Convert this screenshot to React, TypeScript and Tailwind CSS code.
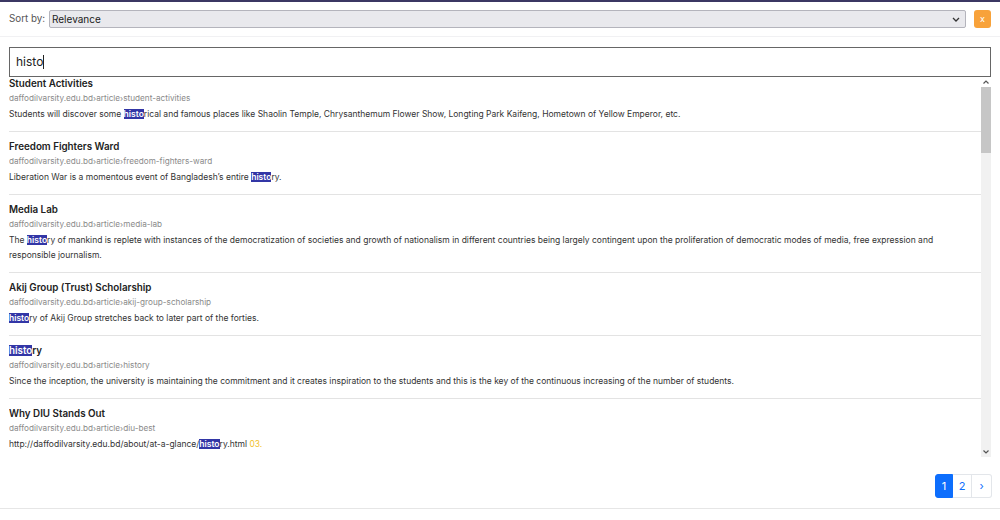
import React from "react";

type Result = {
  title: React.ReactNode;
  slug: string;
  desc: React.ReactNode;
};

function Hl({ children }: { children: React.ReactNode }) {
  return <mark className="bg-[#3236a6] text-white font-semibold">{children}</mark>;
}

const RESULTS: Result[] = [
  {
    title: "Student Activities",
    slug: "student-activities",
    desc: (
      <>
        Students will discover some <Hl>histo</Hl>rical and famous places like Shaolin Temple, Chrysanthemum Flower
        Show, Longting Park Kaifeng, Hometown of Yellow Emperor, etc.
      </>
    ),
  },
  {
    title: "Freedom Fighters Ward",
    slug: "freedom-fighters-ward",
    desc: (
      <>
        Liberation War is a momentous event of Bangladesh’s entire <Hl>histo</Hl>ry.
      </>
    ),
  },
  {
    title: "Media Lab",
    slug: "media-lab",
    desc: (
      <>
        The <Hl>histo</Hl>ry of mankind is replete with instances of the democratization of societies and growth of
        nationalism in different countries being largely contingent upon the proliferation of democratic modes of
        media, free expression and responsible journalism.
      </>
    ),
  },
  {
    title: "Akij Group (Trust) Scholarship",
    slug: "akij-group-scholarship",
    desc: (
      <>
        <Hl>histo</Hl>ry of Akij Group stretches back to later part of the forties.
      </>
    ),
  },
  {
    title: (
      <>
        <Hl>histo</Hl>ry
      </>
    ),
    slug: "history",
    desc: (
      <>
        Since the inception, the university is maintaining the commitment and it creates inspiration to the students
        and this is the key of the continuous increasing of the number of students.
      </>
    ),
  },
  {
    title: "Why DIU Stands Out",
    slug: "diu-best",
    desc: (
      <>
        http://daffodilvarsity.edu.bd/about/at-a-glance/<Hl>histo</Hl>ry.html{" "}
        <span className="text-[#f2c12e]">03.</span>
      </>
    ),
  },
];

function ResultItem({ r, first }: { r: Result; first: boolean }) {
  return (
    <div className={`${first ? "pt-0" : "pt-[8px] border-t border-[#e3e3e3]"} pb-[9px]`}>
      <div className="text-[9.8px] leading-[14px] font-semibold text-[#222]">{r.title}</div>
      <div className="text-[8.2px] leading-[14px] text-[#8a8a8a]">daffodilvarsity.edu.bd›article›{r.slug}</div>
      <div className="mt-[2px] text-[8.5px] leading-[15px] text-[#333]">{r.desc}</div>
    </div>
  );
}

function FakeScrollbar() {
  return (
    <div className="w-[10px] shrink-0 bg-[#f1f1f1] flex flex-col">
      <div className="h-[10px] flex items-center justify-center bg-white">
        <svg width="6" height="4" viewBox="0 0 6 4">
          <path d="M0.5 3.5 L3 1 L5.5 3.5" fill="none" stroke="#555" strokeWidth="1.2" />
        </svg>
      </div>
      <div className="h-[66px] bg-[#c6c6c6]" />
      <div className="flex-1" />
      <div className="h-[10px] flex items-center justify-center">
        <svg width="6" height="4" viewBox="0 0 6 4">
          <path d="M0.5 0.5 L3 3 L5.5 0.5" fill="none" stroke="#555" strokeWidth="1.2" />
        </svg>
      </div>
    </div>
  );
}

export default function App() {
  return (
    <div className="w-[1000px] h-[520px] bg-white overflow-hidden font-['Inter',sans-serif] text-[#333]">
      <div className="h-[2px] bg-[#3b3763]" />

      {/* Sort */}
      <div className="flex items-center px-[9px] pt-[8px] pb-[8px] border-b border-[#f1f1f3]">
        <span className="text-[9.8px] text-[#555] w-[40px]">Sort by:</span>
        <div className="flex-1 h-[18px] flex items-center justify-between bg-[#e9e9ed] border border-[#b4b4bc] rounded-[2px] pl-[2px] pr-[5px]">
          <span className="text-[10px] text-[#222]">Relevance</span>
          <svg width="8" height="5" viewBox="0 0 8 5">
            <path d="M1 1 L4 4 L7 1" fill="none" stroke="#333" strokeWidth="1.3" />
          </svg>
        </div>
        <button className="ml-[8px] w-[17px] h-[18px] rounded-[3px] bg-[#f8a23a] text-white text-[9px] flex items-center justify-center">
          x
        </button>
      </div>

      {/* Search */}
      <div className="px-[9px] pt-[10px]">
        <div className="h-[30px] border border-[#666] flex items-center pl-[6px]">
          <span className="text-[12px] text-[#222]">histo</span>
          <span className="w-px h-[14px] bg-[#222]" />
        </div>

        {/* Results */}
        <div className="h-[380px] flex">
          <div className="flex-1 overflow-hidden">
            {RESULTS.map((r, i) => (
              <ResultItem key={i} r={r} first={i === 0} />
            ))}
          </div>
          <FakeScrollbar />
        </div>
      </div>

      {/* Pagination */}
      <div className="flex justify-end px-[8px] pt-[17px] pb-[10px] border-b border-[#e6e6e6]">
        <div className="flex h-[24px] text-[11px]">
          <span className="w-[18px] flex items-center justify-center bg-[#0d6efd] text-white rounded-l-[3px] border border-[#0d6efd]">
            1
          </span>
          <span className="w-[19px] flex items-center justify-center text-[#0d6efd] border-y border-r border-[#e3e6ea]">
            2
          </span>
          <span className="w-[20px] flex items-center justify-center text-[#0d6efd] border-y border-r border-[#e3e6ea] rounded-r-[3px]">
            ›
          </span>
        </div>
      </div>
    </div>
  );
}
